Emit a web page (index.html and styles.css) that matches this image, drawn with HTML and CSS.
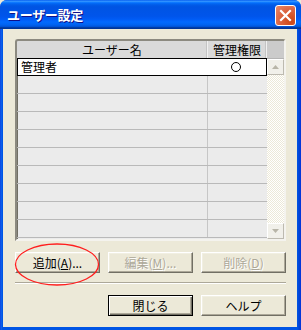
FILE: index.html
```html
<!DOCTYPE html>
<html lang="ja">
<head>
<meta charset="utf-8">
<link rel="stylesheet" href="styles.css">
</head>
<body>
<div class="window">
  <div class="titlebar">
    <span class="title">ユーザー設定</span>
    <div class="close">
      <svg width="13" height="13" viewBox="0 0 13 13"><path d="M2 2 L11 11 M11 2 L2 11" stroke="#fff" stroke-width="2.2" stroke-linecap="square"/></svg>
    </div>
  </div>
  <div class="client">
    <div class="listview">
      <div class="lv-header">
        <div class="hcell c1">ユーザー名</div>
        <div class="hcell c2">管理権限</div>
        <div class="hfill"></div>
      </div>
      <div class="lv-body">
        <div class="lv-rows">
          <div class="row selected"><div class="cell c1">管理者</div><div class="cell c2"><span class="mark"></span></div></div>
          <div class="row"><div class="cell c1"></div><div class="cell c2"></div></div>
          <div class="row"><div class="cell c1"></div><div class="cell c2"></div></div>
          <div class="row"><div class="cell c1"></div><div class="cell c2"></div></div>
          <div class="row"><div class="cell c1"></div><div class="cell c2"></div></div>
          <div class="row"><div class="cell c1"></div><div class="cell c2"></div></div>
          <div class="row"><div class="cell c1"></div><div class="cell c2"></div></div>
          <div class="row"><div class="cell c1"></div><div class="cell c2"></div></div>
          <div class="row"><div class="cell c1"></div><div class="cell c2"></div></div>
          <div class="row"><div class="cell c1"></div><div class="cell c2"></div></div>
        </div>
        <div class="scrollbar">
          <div class="sbtn"><svg width="7" height="4" viewBox="0 0 7 4"><path d="M0 4 L3.5 0 L7 4 Z" fill="#b8b5a8"/></svg></div>
          <div class="track"></div>
          <div class="sbtn"><svg width="7" height="4" viewBox="0 0 7 4"><path d="M0 0 L7 0 L3.5 4 Z" fill="#b8b5a8"/></svg></div>
        </div>
      </div>
    </div>
    <div class="btn-row">
      <button class="btn">追加(<u>A</u>)...</button>
      <button class="btn disabled">編集(<u>M</u>)...</button>
      <button class="btn disabled">削除(<u>D</u>)</button>
    </div>
    <div class="sep"></div>
    <div class="btn-row end">
      <button class="btn default">閉じる</button>
      <button class="btn">ヘルプ</button>
    </div>
    <svg class="ellipse" width="90" height="46" viewBox="0 0 90 46"><ellipse cx="44" cy="22.5" rx="41.5" ry="20.5" fill="none" stroke="#ff1e1e" stroke-width="1.3"/></svg>
  </div>
</div>
</body>
</html>
```
FILE: styles.css
```css
* { box-sizing: border-box; }
html, body { margin: 0; padding: 0; background: #ece9d8; }
body {
  font-family: "Noto Sans CJK JP", "Noto Sans", sans-serif;
  font-size: 12px;
  color: #000;
}
.window {
  width: 301px;
  height: 330px;
  display: flex;
  flex-direction: column;
  background: linear-gradient(to right, #0831d9 0, #166aee 1px, #0055e5 2px, #0055e5 297px, #0046d6 299px, #0831d9 301px);
  border-radius: 7px 7px 0 0;
  overflow: hidden;
}
.titlebar {
  height: 29px;
  flex: none;
  display: flex;
  align-items: center;
  padding: 0 5px 0 7px;
  background: linear-gradient(to bottom, #0058ee 0%, #3593ff 4%, #288eff 6%, #127dff 8%, #036ffc 10%, #0262ee 14%, #0057e5 20%, #0054e3 24%, #0055eb 56%, #005bf5 66%, #026afe 76%, #0062ef 86%, #0052d6 92%, #0040ab 94%, #003092 100%);
}
.title {
  flex: 1;
  color: #fff;
  font-weight: bold;
  font-size: 13px;
  line-height: 16px;
  letter-spacing: -0.3px;
  text-shadow: 1px 1px #0f1089;
  margin-top: 1px;
}
.close {
  width: 21px;
  height: 21px;
  border: 1px solid #fff;
  border-radius: 3px;
  background: radial-gradient(circle at 80% 80%, #cc4614 0%, #dc6542 55%, #e98a6c 100%);
  display: flex;
  align-items: center;
  justify-content: center;
  margin-top: 1px;
}
.close svg { display: block; }
.client {
  position: relative;
  flex: 1;
  margin: 0 4px 3px 3px;
  background: #ece9d8;
  padding: 10px 11px 11px 12px;
  display: flex;
  flex-direction: column;
}
.listview {
  height: 202px;
  flex: none;
  border: 2px solid;
  border-color: #8c8a80 #f4f3ee #f4f3ee #8c8a80;
  box-shadow: inset 1px 1px #716f64;
  border-radius: 3px 3px 0 0;
  background: #ebebeb;
  display: flex;
  flex-direction: column;
  overflow: hidden;
}
.lv-header {
  height: 18px;
  flex: none;
  display: flex;
  background: #dadada;
  border-bottom: 1px solid #b4b4b4;
}
.hcell {
  text-align: center;
  line-height: 17px;
  border-right: 1px solid #f0f0f0;
  box-shadow: inset -1px 0 #c4c4c4;
}
.c1 { width: 191px; flex: none; }
.c2 { width: 59px; flex: none; }
.hfill { flex: 1; background: #cbcbcb; }
.lv-body { flex: 1; display: flex; min-height: 0; }
.lv-rows { width: 250px; flex: none; display: flex; flex-direction: column; }
.row {
  height: 18px;
  flex: none;
  display: flex;
  border-bottom: 1px solid #b9b9b9;
}
.row .c1 { border-right: 1px solid #c6c6c6; }
.row.selected {
  background: #fff;
  border: 1px solid #000;
  height: 18px;
  margin-top: -1px;
}
.row.selected .c1 { border-right: none; width: 190px; }
.cell { line-height: 16px; padding-left: 3px; }
.row.selected .c2 { display: flex; align-items: center; justify-content: center; padding: 0; width: 58px; }
.mark {
  flex: none;
  display: block;
  width: 10px;
  height: 10px;
  border: 1px solid #000;
  border-radius: 50%;
  margin-left: -2px;
}
.scrollbar {
  flex: 1;
  display: flex;
  flex-direction: column;
}
.sbtn {
  height: 16px;
  flex: none;
  background: #f1f0ea;
  border: 1px solid;
  border-color: #fff #bdbab0 #bdbab0 #fff;
  display: flex;
  align-items: center;
  justify-content: center;
}
.sbtn svg { display: block; }
.track {
  flex: 1;
  background: conic-gradient(#fff 90deg, #ece9d8 90deg 180deg, #fff 180deg 270deg, #ece9d8 270deg) 0 0 / 2px 2px;
}
.btn-row {
  display: flex;
  gap: 8px;
  margin-top: 11px;
}
.btn-row.end { justify-content: flex-end; }
.btn {
  width: 85px;
  height: 21px;
  padding: 0;
  margin: 0;
  font-family: inherit;
  font-size: 12px;
  line-height: 16px;
  color: #000;
  background: #ece9d8;
  border: 1px solid;
  border-color: #fff #716f64 #716f64 #fff;
  box-shadow: inset -1px -1px #aca899, inset 1px 1px #f1efe2;
  border-radius: 0;
}
.btn u { text-underline-offset: 1px; }
.btn.disabled {
  color: #aca899;
  text-shadow: 1px 1px #fff;
}
.btn.default {
  border: 1px solid #000;
  box-shadow: inset 1px 1px #fff, inset -1px -1px #716f64, inset -2px -2px #aca899;
}
.sep {
  height: 2px;
  flex: none;
  margin-top: 9px;
  border-top: 1px solid #aca899;
  border-bottom: 1px solid #fff;
}
.ellipse {
  position: absolute;
  left: 10px;
  top: 213px;
  pointer-events: none;
}
```
